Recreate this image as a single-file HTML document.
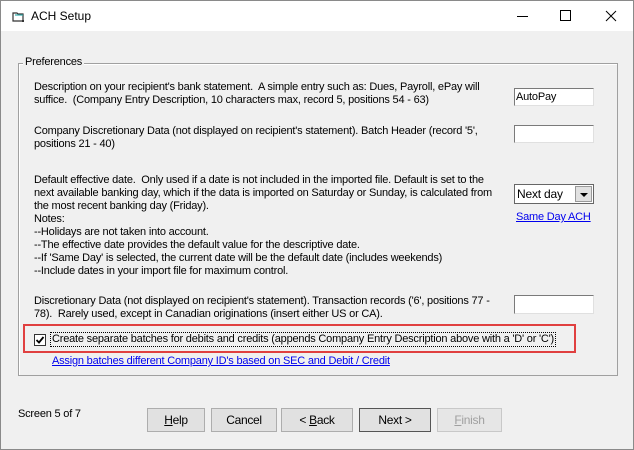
<!DOCTYPE html>
<html><head><meta charset="utf-8"><style>
*{margin:0;padding:0;box-sizing:border-box}
body{width:634px;height:450px;overflow:hidden;background:#f0f0f0;font-family:"Liberation Sans",sans-serif;font-size:11px;color:#000;position:relative}
.win{position:absolute;left:0;top:0;width:634px;height:450px;border:1px solid #8a8a8a}
.title{position:absolute;left:0;top:0;width:632px;height:30px;background:#fff}
.t{position:absolute;white-space:nowrap;letter-spacing:-0.2px;line-height:13px}
.grp{position:absolute;left:17px;top:62px;width:600px;height:313px;border:1px solid #a0a0a0;box-shadow:1px 1px 0 #fff inset}
.inp{position:absolute;background:#fff;border:1px solid #7a7a7a;border-right-color:#e0e0e0;border-bottom-color:#e0e0e0}
.btn{position:absolute;top:407px;height:24px;background:#e1e1e1;border:1px solid #adadad;text-align:center;line-height:22px;font-size:12px;letter-spacing:-0.3px}
a{color:#0000ee}
</style></head><body>
<div class="win">
<div class="title">
<svg style="position:absolute;left:11px;top:10px" width="13" height="12" viewBox="0 0 13 12"><path d="M1 2h4l1 1h5v7H1z" fill="none" stroke="#333" stroke-width="1.2"/><path d="M3 4h8" stroke="#3aa" stroke-width="1.2"/><rect x="10" y="9" width="2" height="2" fill="#333"/></svg>
<div style="position:absolute;left:30px;top:8px;font-size:12px">ACH Setup</div>
<div style="position:absolute;left:516px;top:15px;width:11px;height:1px;background:#000"></div>
<div style="position:absolute;left:559px;top:9px;width:11px;height:11px;border:1px solid #000"></div>
<svg style="position:absolute;left:604px;top:9px" width="12" height="12"><path d="M1 1L11 11M11 1L1 11" stroke="#000" stroke-width="1"/></svg>
</div>
<div class="grp"></div>
<div class="t" style="left:22px;top:55px;background:#f0f0f0;padding:0 2px">Preferences</div>

<div class="t" style="left:33px;top:80px">Description on your recipient's bank statement.&nbsp; A simple entry such as: Dues, Payroll, ePay will<br>suffice.&nbsp; (Company Entry Description, 10 characters max, record 5, positions 54 - 63)</div>
<div class="inp" style="left:513px;top:87px;width:80px;height:18px"><span class="t" style="left:1px;top:2px">AutoPay</span></div>

<div class="t" style="left:33px;top:124px">Company Discretionary Data (not displayed on recipient's statement). Batch Header (record '5',<br>positions 21 - 40)</div>
<div class="inp" style="left:513px;top:124px;width:80px;height:18px"></div>

<div class="t" style="left:33px;top:173px">Default effective date.&nbsp; Only used if a date is not included in the imported file. Default is set to the<br>next available banking day, which if the data is imported on Saturday or Sunday, is calculated from<br>the most recent banking day (Friday).<br>Notes:<br>--Holidays are not taken into account.<br>--The effective date provides the default value for the descriptive date.<br>--If 'Same Day' is selected, the current date will be the default date (includes weekends)<br>--Include dates in your import file for maximum control.</div>
<div class="inp" style="left:513px;top:183px;width:80px;height:20px;border:1px solid #666"><span class="t" style="left:2px;top:3px;font-size:12px">Next day</span>
<div style="position:absolute;right:1px;top:1px;width:17px;height:16px;background:#e1e1e1;border:1px solid #999"><div style="position:absolute;left:4px;top:6px;border-left:4px solid transparent;border-right:4px solid transparent;border-top:4px solid #000"></div></div></div>
<div class="t" style="left:515px;top:210px"><a href="#">Same Day ACH</a></div>

<div class="t" style="left:33px;top:294px">Discretionary Data (not displayed on recipient's statement). Transaction records ('6', positions 77 -<br>78).&nbsp; Rarely used, except in Canadian originations (insert either US or CA).</div>
<div class="inp" style="left:513px;top:294px;width:80px;height:19px"></div>

<div style="position:absolute;left:22px;top:323px;width:553px;height:29px;border:2px solid #e04040"></div>
<div style="position:absolute;left:33px;top:333px;width:12px;height:12px;background:#fff;border:1px solid #333"><svg width="10" height="10" style="position:absolute;left:0;top:0"><path d="M1.5 5L4 7.5L8.5 2" fill="none" stroke="#000" stroke-width="1.8"/></svg></div>
<div class="t" style="left:50px;top:332px;outline:1px dotted #000;padding:0 1px">Create separate batches for debits and credits (appends Company Entry Description above with a 'D' or 'C')</div>
<div class="t" style="left:51px;top:354px"><a href="#">Assign batches different Company ID's based on SEC and Debit / Credit</a></div>

<div class="t" style="left:17px;top:407px">Screen 5 of 7</div>
<div class="btn" style="left:146px;width:58px"><u>H</u>elp</div>
<div class="btn" style="left:210px;width:66px">Cancel</div>
<div class="btn" style="left:280px;width:72px">&lt; <u>B</u>ack</div>
<div class="btn" style="left:358px;width:72px;border:1px solid #555">Next &gt;</div>
<div class="btn" style="left:436px;width:65px;color:#a0a0a0;border-color:#c8c8c8;background:#e6e6e6"><u>F</u>inish</div>
</div>
</body></html>
